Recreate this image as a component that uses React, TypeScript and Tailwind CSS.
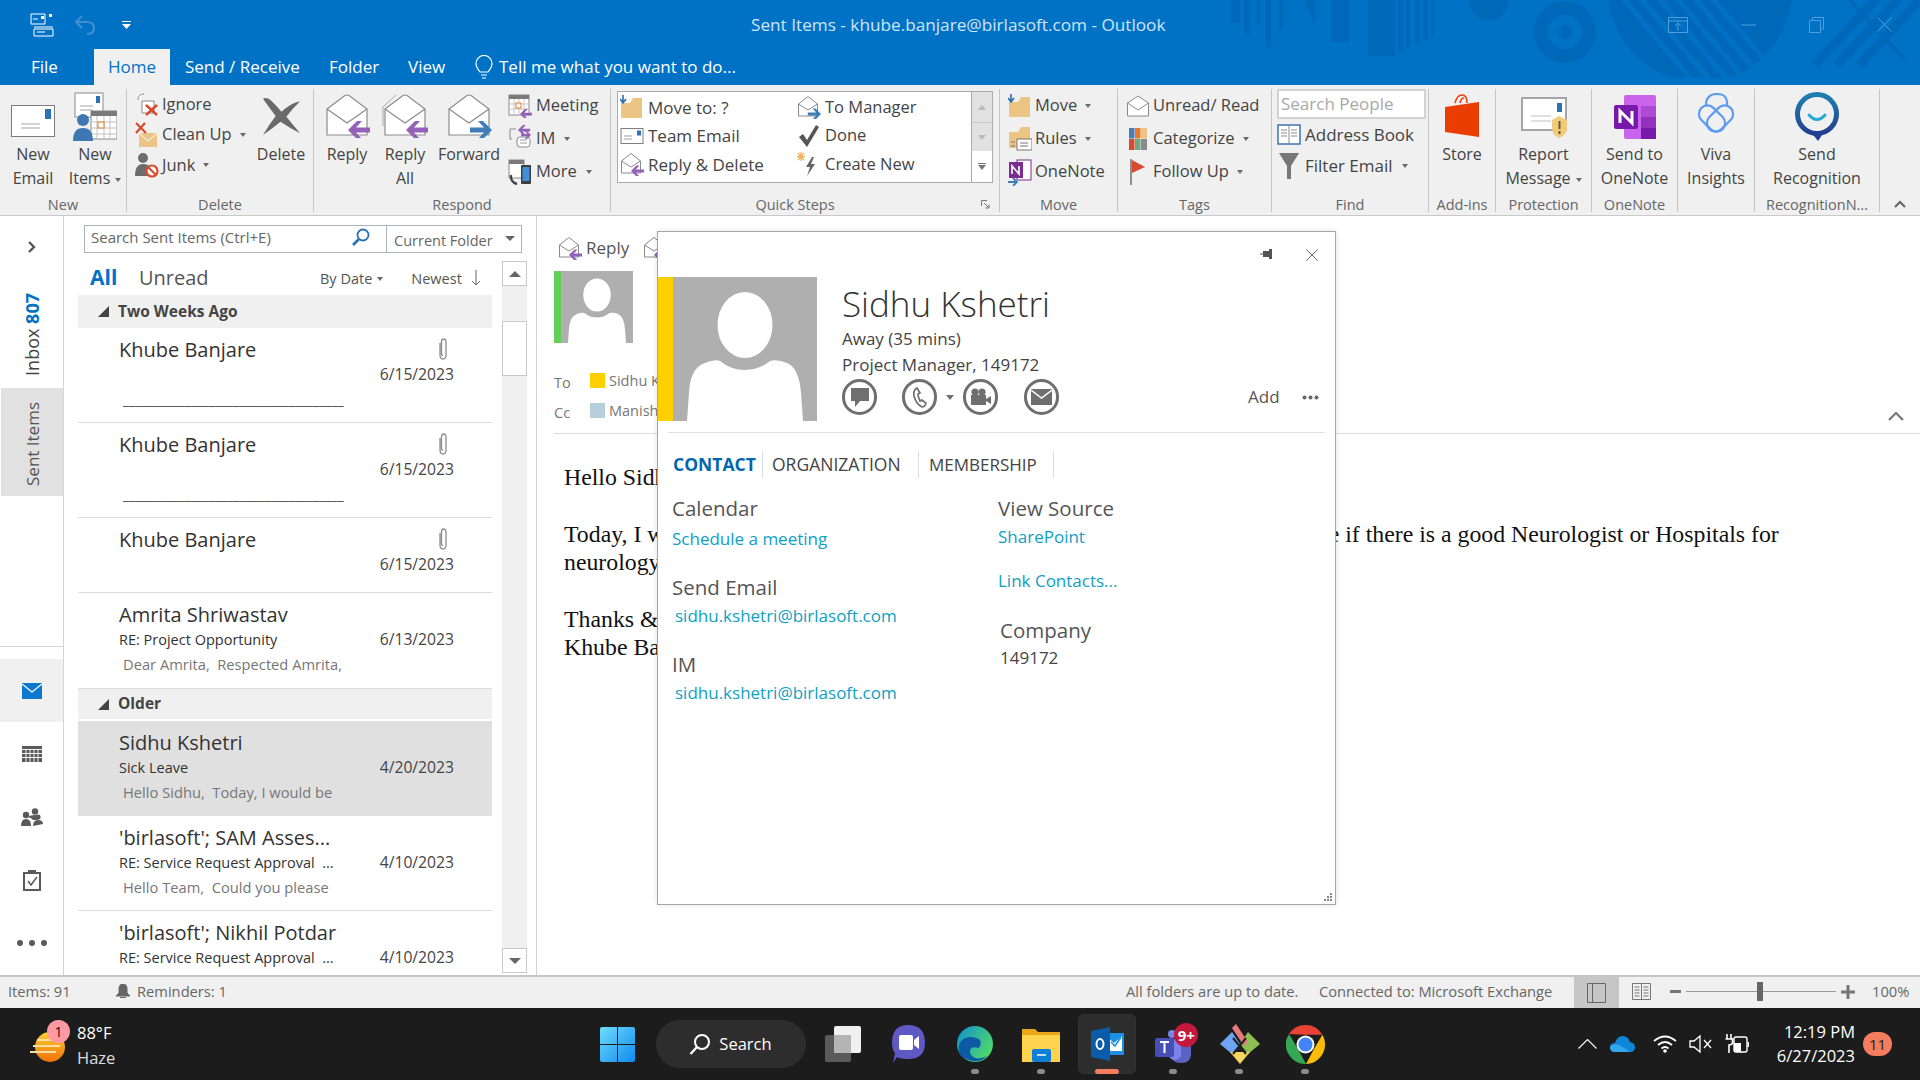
import React from "react";

type Ch = { children?: React.ReactNode };
const PURPLE = "#9460b8";
const BLUE_ARW = "#3f7cb8";

function Arrow({ x, y, s = 1, left = true, color = PURPLE }: { x: number; y: number; s?: number; left?: boolean; color?: string }) {
  const t = `translate(${x} ${y}) scale(${left ? s : -s} ${s})`;
  return <path transform={t} d="M0 0 L9 -9 H14 L8 -2.5 H22 V2.5 H8 L14 9 H9 Z" fill={color} />;
}

function OpenEnvelope({ w = 46, h = 44, kind = "reply" }: { w?: number; h?: number; kind?: "reply" | "all" | "forward" | "plain" }) {
  return (
    <svg width={w} height={h} viewBox="0 0 46 44">
      {kind === "all" && <path d="M1 32 V13 L14 1" fill="none" stroke="#a8a8a8" strokeWidth="1" />}
      <path d="M3 15 L21 1.5 Q23 0.5 25 1.5 L43 15 V41 H3 Z" fill="#fff" stroke="#8c8c8c" strokeWidth="1.2" />
      <path d="M3 15 L23 29 L43 15" fill="none" stroke="#8c8c8c" strokeWidth="1.2" />
      {kind === "reply" && <Arrow x={24} y={36} />}
      {kind === "all" && <Arrow x={24} y={36} />}
      {kind === "forward" && <Arrow x={46} y={36} left={false} color={BLUE_ARW} />}
    </svg>
  );
}

function SmallOpenEnv({ arrow }: { arrow?: "left" | "right" | "none" }) {
  return (
    <svg width="24" height="24" viewBox="0 0 24 24">
      <path d="M1.5 9 L11 1.5 L20.5 9 V21 H1.5 Z" fill="#fff" stroke="#8a8a8a" />
      <path d="M1.5 9 L11 15 L20.5 9" fill="none" stroke="#8a8a8a" />
      {arrow === "left" && <Arrow x={11} y={19} s={0.6} />}
      {arrow === "right" && <Arrow x={24} y={19} s={0.6} left={false} color={BLUE_ARW} />}
    </svg>
  );
}

function Caret({ className = "" }: { className?: string }) {
  return <span className={`inline-block w-0 h-0 border-x-[3.5px] border-x-transparent border-t-[4px] border-t-[#6a6a6a] ml-[5px] align-middle ${className}`} />;
}

function SmallRow({ icon, label, caret, h = "h-[31px]", gap = "gap-[3px]", size = "text-[16.5px]" }: { icon: React.ReactNode; label: string; caret?: boolean; h?: string; gap?: string; size?: string }) {
  return (
    <div className={`flex items-center ${h} ${gap} ${size} whitespace-nowrap text-[#444]`}>
      <span className="w-[24px] h-[24px] flex items-center justify-center shrink-0">{icon}</span>
      <span>{label}</span>
      {caret && <Caret />}
    </div>
  );
}

function Big({ icon, l1, l2, caret, w }: { icon: React.ReactNode; l1: string; l2?: string; caret?: boolean; w: string }) {
  return (
    <div className={`${w} shrink-0 flex flex-col items-center text-[16px] text-[#444] whitespace-nowrap`}>
      <div className="h-[53px] flex items-center justify-center">{icon}</div>
      <div className="h-[24px] leading-[24px]">{l1}</div>
      {l2 && (
        <div className="h-[24px] leading-[24px]">
          {l2}
          {caret && <Caret />}
        </div>
      )}
    </div>
  );
}

function Group({ w, label, children, extra, labelPad = "" }: { w: string; label?: string; children?: React.ReactNode; extra?: React.ReactNode; labelPad?: string }) {
  return (
    <div className={`${w} shrink-0 h-full border-r border-[#c6c6c6] flex flex-col relative`}>
      <div className="h-[104px] shrink-0 flex">{children}</div>
      <div className={`h-[19px] shrink-0 mt-[2px] flex items-center justify-center text-[14.5px] text-[#666] whitespace-nowrap ${labelPad}`}>{label}</div>
      {extra}
    </div>
  );
}

function FolderIcon({ arrow }: { arrow?: boolean }) {
  return (
    <svg width="24" height="24" viewBox="0 0 24 24">
      <path d="M1 8 H10 L13 3 H22 V23 H1 Z" fill="#ecc585" />
      {arrow && <path d="M3 0 V7 M0 4 L3 8 L6 4" fill="none" stroke="#2c6cb0" strokeWidth="1.6" />}
    </svg>
  );
}

function SmallEnvelope() {
  return (
    <svg width="24" height="18" viewBox="0 0 24 18">
      <rect x="1" y="1.5" width="22" height="15" fill="#fff" stroke="#7f7f7f" />
      <rect x="17" y="3.5" width="4" height="5" fill="#2a72b5" />
      <path d="M4 9 H12 M4 12 H12" stroke="#9a9a9a" />
    </svg>
  );
}

function Ribbon() {
  return (
    <div className="h-[131px] bg-[#f0f0f0] border-b border-[#c9c9c9] pt-[4px] pb-[3px] flex">
      <Group w="w-[127px]" label="New">
        <div className="w-[2px]" />
        <Big
          w="w-[62px]"
          icon={
            <svg width="44" height="32" viewBox="0 0 44 32" className="mt-[10px]">
              <rect x="0.5" y="0.5" width="43" height="31" fill="#fff" stroke="#7c7c7c" />
              <rect x="34" y="4" width="6" height="10" fill="#2a72b5" />
              <path d="M10 19 H29 M10 23 H29" stroke="#a5a5a5" />
            </svg>
          }
          l1="New"
          l2="Email"
        />
        <Big
          w="w-[62px]"
          icon={
            <svg width="44" height="50" viewBox="0 0 44 50">
              <rect x="2" y="2" width="28" height="24" fill="#fff" stroke="#8a8a8a" />
              <rect x="23" y="5" width="4" height="7" fill="#2a72b5" />
              <path d="M7 15 H20 M7 19 H20" stroke="#a5a5a5" />
              <rect x="18" y="20" width="26" height="28" fill="#fff" stroke="#888" />
              <rect x="18" y="20" width="26" height="5" fill="#7a7a7a" />
              <path d="M24 25 V48 M31 25 V48 M37 25 V48 M18 31 H44 M18 37 H44 M18 43 H44" stroke="#c2c2c2" />
              <rect x="25" y="31" width="6" height="6" fill="#fff" stroke="#e07a2a" />
              <circle cx="10" cy="29" r="6" fill="#3d78b5" />
              <path d="M0 50 Q0 37 10 37 Q20 37 20 50 Z" fill="#3d78b5" />
            </svg>
          }
          l1="New"
          l2="Items"
          caret
        />
      </Group>
      <Group w="w-[187px]" label="Delete">
        <div className="w-[123px] pl-[8px] flex flex-col">
          <SmallRow
            h="h-[30.5px]"
            label="Ignore"
            icon={
              <svg width="24" height="24" viewBox="0 0 24 24">
                <path d="M3 8 Q3 2 9 2 M7 9 H19 V21 H7 Z" fill="#fff" stroke="#8a8a8a" />
                <path d="M11 13 L22 23 M22 13 L11 23" stroke="#d9492e" strokeWidth="2.4" />
              </svg>
            }
          />
          <SmallRow
            h="h-[30.5px]"
            label="Clean Up"
            caret
            icon={
              <svg width="24" height="26" viewBox="0 0 24 26">
                <path d="M4 11 H22 V25 H4 Z" fill="#ecc585" />
                <path d="M4 11 L13 19 L22 11" fill="none" stroke="#fff" />
                <path d="M1 1 L11 11 M10 1 L1 11" stroke="#d9492e" strokeWidth="2.2" />
              </svg>
            }
          />
          <SmallRow
            h="h-[30.5px]"
            label="Junk"
            caret
            icon={
              <svg width="24" height="26" viewBox="0 0 24 26">
                <circle cx="8" cy="6" r="5" fill="#6d6d6d" />
                <path d="M0 24 Q0 12 8 12 Q14 12 15 16 L14 24 Z" fill="#6d6d6d" />
                <circle cx="17" cy="19" r="5.5" fill="#fff" stroke="#d9492e" strokeWidth="2.2" />
                <path d="M13 15 L21 23" stroke="#d9492e" strokeWidth="2.2" />
              </svg>
            }
          />
        </div>
        <Big
          w="w-[62px]"
          icon={
            <svg width="41" height="38" viewBox="0 0 42 46" preserveAspectRatio="none">
              <path d="M2 2 Q6 0 10 4 Q17 12 21 18 Q29 8 40 5 Q32 14 26 24 Q33 34 40 44 Q30 38 20 30 Q12 38 2 46 Q8 34 15 23 Q8 12 2 2 Z" fill="#6a6a6a" />
            </svg>
          }
          l1="Delete"
        />
      </Group>
      <Group w="w-[297px]" label="Respond">
        <div className="w-[4px]" />
        <Big w="w-[58px]" icon={<OpenEnvelope />} l1="Reply" />
        <Big w="w-[58px]" icon={<OpenEnvelope kind="all" />} l1="Reply" l2="All" />
        <Big w="w-[70px]" icon={<OpenEnvelope kind="forward" />} l1="Forward" />
        <div className="w-[4px]" />
        <div className="flex flex-col gap-[2px] pt-[1px]">
          <SmallRow
            label="Meeting"
            gap="gap-[4px]"
            icon={
              <svg width="24" height="24" viewBox="0 0 24 24">
                <rect x="1" y="1" width="20" height="20" fill="#fff" stroke="#888" />
                <rect x="1" y="1" width="20" height="4" fill="#7a7a7a" />
                <path d="M6 5 V21 M11 5 V21 M16 5 V21 M1 10 H21 M1 15 H21" stroke="#c8c8c8" />
                <rect x="8" y="9" width="5" height="5" fill="#fff" stroke="#e07a2a" />
                <Arrow x={12} y={20} s={0.55} />
              </svg>
            }
          />
          <SmallRow
            label="IM"
            caret
            gap="gap-[4px]"
            icon={
              <svg width="24" height="28" viewBox="0 0 24 28">
                <path d="M4 14 H2 V4 H8" fill="none" stroke="#8a8a8a" />
                <rect x="9" y="12" width="13" height="10" rx="3" fill="#fff" stroke="#8a8a8a" />
                <path d="M12 15 H19 M12 18 H19" stroke="#a0a0a0" />
                <Arrow x={10} y={5} s={0.55} />
                <Arrow x={23} y={10} s={0.45} left={false} />
              </svg>
            }
          />
          <SmallRow
            label="More"
            caret
            gap="gap-[4px]"
            icon={
              <svg width="24" height="28" viewBox="0 0 24 28">
                <rect x="1" y="2" width="15" height="18" fill="#fff" stroke="#888" />
                <rect x="1" y="2" width="15" height="4" fill="#7a7a7a" />
                <rect x="13" y="7" width="10" height="19" rx="1" fill="#3d3d3d" />
                <rect x="14.5" y="9" width="7" height="14" fill="#3f8fd6" />
                <path d="M3 17 Q2 24 9 26" fill="none" stroke="#444" strokeWidth="2.4" />
              </svg>
            }
          />
        </div>
      </Group>
      <Group
        w="w-[389px]"
        label="Quick Steps"
        labelPad="pr-[20px]"
        extra={
          <svg width="9" height="9" viewBox="0 0 9 9" className="absolute right-[9px] bottom-[3px]">
            <path d="M0.5 6 V0.5 H6 M3 3 L8 8 M8 4.5 V8 H4.5" fill="none" stroke="#777" />
          </svg>
        }
      >
        <div className="ml-[6px] mt-[2px] w-[376px] h-[92px] border border-[#ababab] bg-white flex text-[#555]">
          <div className="flex-1 grid grid-cols-[177px_1fr] pl-[2px] pt-[1px] content-start">
            <SmallRow h="h-[28.5px]" gap="gap-[4px]" label="Move to: ?" size="text-[17px]" icon={<FolderIcon arrow />} />
            <SmallRow h="h-[28.5px]" gap="gap-[4px]" label="To Manager" icon={<SmallOpenEnv arrow="right" />} />
            <SmallRow h="h-[28.5px]" gap="gap-[4px]" label="Team Email" size="text-[17px]" icon={<SmallEnvelope />} />
            <SmallRow
              h="h-[28.5px]"
              gap="gap-[4px]"
              label="Done"
              icon={
                <svg width="22" height="24" viewBox="0 0 22 24">
                  <path d="M1 13 L5 10 L9 16 L18 1 L21 3 L9 23 Z" fill="#555" />
                </svg>
              }
            />
            <SmallRow h="h-[28.5px]" gap="gap-[4px]" label="Reply & Delete" size="text-[17px]" icon={<SmallOpenEnv arrow="left" />} />
            <SmallRow
              h="h-[28.5px]"
              gap="gap-[4px]"
              label="Create New"
              icon={
                <svg width="24" height="26" viewBox="0 0 24 26">
                  <path d="M4 1 V10 M0 5.5 H8 M1 2 L7 9 M7 2 L1 9" stroke="#efb35c" strokeWidth="1.3" />
                  <path d="M15 6 L9 16 H13 L10 25 L18 13 H14 L17 6 Z" fill="#666" />
                </svg>
              }
            />
          </div>
          <div className="w-[21px] border-l border-[#ababab] flex flex-col">
            <div className="h-[31px] bg-[#e1e1e1] border-b border-[#c9c9c9] flex items-center justify-center">
              <span className="w-0 h-0 border-x-[4px] border-x-transparent border-b-[5px] border-b-[#bbb]" />
            </div>
            <div className="h-[28px] bg-[#e1e1e1] flex items-center justify-center">
              <span className="w-0 h-0 border-x-[4px] border-x-transparent border-t-[5px] border-t-[#bbb]" />
            </div>
            <div className="flex-1 flex flex-col items-center justify-center gap-[1px]">
              <span className="w-[8px] h-px bg-[#777]" />
              <span className="w-0 h-0 border-x-[4px] border-x-transparent border-t-[5px] border-t-[#777]" />
            </div>
          </div>
        </div>
      </Group>
      <Group w="w-[118px]" label="Move">
        <div className="flex flex-col pl-[8px] gap-[2px] pt-[1px]">
          <SmallRow label="Move" caret icon={<FolderIcon arrow />} />
          <SmallRow
            label="Rules"
            caret
            icon={
              <svg width="24" height="26" viewBox="0 0 24 26">
                <path d="M1 6 H10 L13 1 H22 V22 H1 Z" fill="#ecc585" />
                <rect x="9" y="13" width="15" height="11" fill="#fff" stroke="#777" />
                <path d="M3 16 H7 M3 20 H7 M12 17 H20 M12 20 H20" stroke="#777" />
              </svg>
            }
          />
          <SmallRow
            label="OneNote"
            icon={
              <svg width="24" height="28" viewBox="0 0 24 28">
                <rect x="9" y="2" width="14" height="20" fill="#fff" stroke="#7b2d8f" />
                <rect x="1" y="4" width="14" height="16" fill="#7b2d8f" />
                <path d="M4 16 V8 L11 16 V8" fill="none" stroke="#fff" strokeWidth="1.6" />
                <path d="M0 24 H8 M5 20 L9 24 L5 28" fill="none" stroke={BLUE_ARW} strokeWidth="1.8" />
              </svg>
            }
          />
        </div>
      </Group>
      <Group w="w-[154px]" label="Tags">
        <div className="flex flex-col pl-[8px] gap-[2px] pt-[1px]">
          <SmallRow
            label="Unread/ Read"
            icon={
              <svg width="24" height="24" viewBox="0 0 24 24">
                <path d="M1.5 9 L12 2 L22.5 9 V22 H1.5 Z" fill="#fff" stroke="#8a8a8a" />
                <path d="M1.5 9 L12 16 L22.5 9" fill="none" stroke="#8a8a8a" />
              </svg>
            }
          />
          <SmallRow
            label="Categorize"
            caret
            icon={
              <svg width="18" height="22" viewBox="0 0 18 22">
                <rect width="5.5" height="10.5" fill="#4a7db5" />
                <rect x="6" width="5.5" height="10.5" fill="#e67b23" />
                <rect x="12" width="6" height="10.5" fill="#ecc585" />
                <rect y="11" width="5.5" height="11" fill="#d9492e" />
                <rect x="6" y="11" width="5.5" height="11" fill="#6fa88a" />
                <rect x="12" y="11" width="6" height="11" fill="#8a8a8a" />
              </svg>
            }
          />
          <SmallRow
            label="Follow Up"
            caret
            icon={
              <svg width="18" height="26" viewBox="0 0 18 26">
                <path d="M2 0 V26" stroke="#777" strokeWidth="1.6" />
                <path d="M3 1 L16 8 L3 14 Z" fill="#d9492e" />
              </svg>
            }
          />
        </div>
      </Group>
      <Group w="w-[157px]" label="Find">
        <div className="flex flex-col pl-[5px]">
          <div className="w-[149px] h-[30px] border-2 border-[#d2d2d2] bg-white text-[#a8a8a8] text-[17px] leading-[26px] pl-[2px] whitespace-nowrap">Search People</div>
          <SmallRow
            h="h-[32px]"
            gap="gap-[4px]"
            size="text-[17px]"
            label="Address Book"
            icon={
              <svg width="24" height="24" viewBox="0 0 24 24">
                <rect x="1" y="2" width="22" height="19" fill="#fff" stroke="#3f72ad" strokeWidth="1.5" />
                <path d="M12 2 V21 M4 7 H10 M4 10 H10 M4 13 H10 M14 7 H20 M14 10 H20 M14 13 H20" stroke="#8a8a8a" />
              </svg>
            }
          />
          <SmallRow
            h="h-[30px]"
            gap="gap-[4px]"
            size="text-[17px]"
            label="Filter Email"
            caret
            icon={
              <svg width="22" height="28" viewBox="0 0 22 28">
                <path d="M1 1 H21 L13 14 V27 H9 V14 Z" fill="#777" />
              </svg>
            }
          />
        </div>
      </Group>
      <Group w="w-[67px]" label="Add-ins">
        <Big
          w="w-full"
          l1="Store"
          icon={
            <svg width="36" height="44" viewBox="0 0 36 44">
              <path d="M11 9 Q13 1 18 1 Q23 1 23 9 M16 9 Q17 4 20 4" fill="none" stroke="#e8400c" strokeWidth="1.6" />
              <path d="M1 13 L35 8 V43 L1 38 Z" fill="#ea3e00" />
            </svg>
          }
        />
      </Group>
      <Group w="w-[96px]" label="Protection">
        <Big
          w="w-full"
          l1="Report"
          l2="Message"
          caret
          icon={
            <svg width="46" height="42" viewBox="0 0 46 42" className="mt-[2px]">
              <rect x="1" y="2" width="44" height="32" fill="#fff" stroke="#a5a5a5" strokeWidth="2" />
              <rect x="36" y="7" width="5" height="9" fill="#2a72b5" />
              <path d="M10 20 H30 M10 25 H30" stroke="#c0c0c0" />
              <path d="M31 24 L38 20 L46 24 V32 Q46 39 38 42 Q31 39 31 32 Z" fill="#f0cc7a" />
              <path d="M38.5 25 V33 M38.5 35 V38" stroke="#665a33" strokeWidth="2" />
            </svg>
          }
        />
      </Group>
      <Group w="w-[86px]" label="OneNote">
        <Big
          w="w-full"
          l1="Send to"
          l2="OneNote"
          icon={
            <svg width="44" height="46" viewBox="0 0 44 46" className="mt-[2px]">
              <rect x="11" y="1" width="32" height="44" rx="2" fill="#ca64ea" />
              <rect x="28" y="12" width="15" height="11" fill="#ae4bd5" />
              <rect x="28" y="23" width="15" height="11" fill="#9332bf" />
              <rect x="28" y="34" width="15" height="11" fill="#7719aa" />
              <rect x="1" y="11" width="24" height="24" rx="2" fill="#7719aa" />
              <path d="M7 29 V17 L19 29 V17" fill="none" stroke="#fff" strokeWidth="3" />
            </svg>
          }
        />
      </Group>
      <Group w="w-[77px]">
        <Big
          w="w-full"
          l1="Viva"
          l2="Insights"
          icon={
            <svg width="46" height="46" viewBox="0 0 46 46" className="mt-[1px]">
              <g fill="none" stroke="#5d9cf2" strokeWidth="2.2">
                <rect x="4" y="17" width="30" height="17" rx="8.5" transform="rotate(45 19 25.5)" />
                <rect x="12" y="17" width="30" height="17" rx="8.5" transform="rotate(-45 27 25.5)" />
                <path d="M13 12 Q13 1 24 1 Q35 1 34 12" />
              </g>
            </svg>
          }
        />
      </Group>
      <Group w="w-[125px]" label="RecognitionN...">
        <Big
          w="w-full"
          l1="Send"
          l2="Recognition"
          icon={
            <svg width="46" height="50" viewBox="0 0 46 50">
              <defs>
                <linearGradient id="rg" x1="0" y1="0" x2="0" y2="1">
                  <stop offset="0" stopColor="#1f7fb0" />
                  <stop offset="1" stopColor="#233f8f" />
                </linearGradient>
              </defs>
              <circle cx="23" cy="23" r="19.5" fill="none" stroke="url(#rg)" strokeWidth="5" />
              <path d="M17 41 L24 50 L30 41 Z" fill="#233f8f" />
              <path d="M15 24 Q23 33 31 24" fill="none" stroke="#25a7d8" strokeWidth="3" strokeLinecap="round" />
            </svg>
          }
        />
      </Group>
      <div className="flex-1 flex items-end justify-center pb-[4px]">
        <svg width="12" height="8" viewBox="0 0 12 8">
          <path d="M1 7 L6 2 L11 7" fill="none" stroke="#666" strokeWidth="2" />
        </svg>
      </div>
    </div>
  );
}

function TitleBar() {
  const c = "#0068b8";
  return (
    <div className="relative">
      <svg width="700" height="85" viewBox="1220 0 700 85" className="absolute right-0 top-0">
        <defs>
          <clipPath id="bc">
            <circle cx="1700" cy="-10" r="92" />
          </clipPath>
        </defs>
        {[
          [1231, 9, 23],
          [1246, 4, 35],
          [1244, 4, 32],
          [1257, 3, 24],
          [1266, 5, 47],
          [1279, 4, 30],
          [1331, 18, 42],
          [1368, 27, 56],
          [1398, 5, 52],
          [1406, 4, 48],
          [1415, 4, 44],
          [1424, 4, 40],
          [1431, 3, 36],
        ].map(([x, w, h]) => (
          <rect key={x} x={x} y="0" width={w} height={h} fill={c} />
        ))}
        <path d="M1305 0 H1315 V28 Z" fill={c} />
        <circle cx="1489" cy="0" r="20" fill={c} />
        <circle cx="1565" cy="32" r="24" fill="none" stroke={c} strokeWidth="14" />
        <circle cx="1565" cy="32" r="7" fill={c} />
        <g clipPath="url(#bc)">
          <rect x="1600" y="-110" width="200" height="188" fill={c} />
          {[0, 1, 2, 3, 4, 5].map((i) => (
            <path key={i} d={`M${1620 + i * 18} -5 L${1700 + i * 18} 90`} stroke="#0072c6" strokeWidth="5" />
          ))}
        </g>
        {[0, 1, 2].map((i) => (
          <path key={i} d={`M${1880 + i * 22} -5 L${1815 + i * 22} 65`} stroke={c} strokeWidth="9" />
        ))}
        <path d="M1845 -5 L1905 60" stroke={c} strokeWidth="4" />
      </svg>
      <div className="relative h-[49px] flex items-center">
        <div className="w-[30px]" />
        <svg width="24" height="24" viewBox="0 0 24 24">
          <path d="M1 1 H15 V11 H1 Z M4 16 H23 V23 H4 Z M4 14 H23" fill="none" stroke="#fff" />
          <rect x="11" y="3" width="3" height="3" fill="#fff" />
          <rect x="19" y="1" width="3" height="3" fill="#fff" />
          <path d="M3 6 H8 M7 19 H15" stroke="#fff" />
        </svg>
        <svg width="22" height="20" viewBox="0 0 22 20" className="ml-[20px]">
          <path d="M8 1 L2 7 L8 13 M2 7 H13 Q20 7 20 13 Q20 19 13 19" fill="none" stroke="#3f8fd0" strokeWidth="2.2" />
        </svg>
        <svg width="9" height="8" viewBox="0 0 9 8" className="ml-[26px]">
          <path d="M0 0 H9 V1 H0 Z M0 3 H9 L4.5 8 Z" fill="#fff" />
        </svg>
        <div className="absolute left-[751px] top-[12px] text-[17.2px] text-[#cfe4f5] whitespace-nowrap">Sent Items - khube.banjare@birlasoft.com - Outlook</div>
        <div className="ml-auto flex items-center pr-[28px] gap-[53px]">
          <svg width="20" height="16" viewBox="0 0 20 16">
            <path d="M0.5 0.5 H19.5 V15.5 H0.5 Z M0.5 4 H19.5 M10 14 V6 M7 9 L10 6 L13 9" fill="none" stroke="#4f9fdc" />
          </svg>
          <svg width="15" height="2" viewBox="0 0 15 2">
            <path d="M0 1 H15" stroke="#4f9fdc" />
          </svg>
          <svg width="15" height="16" viewBox="0 0 15 16">
            <path d="M0.5 3.5 H11.5 V15.5 H0.5 Z M3.5 3 V0.5 H14.5 V12 H12" fill="none" stroke="#4f9fdc" />
          </svg>
          <svg width="15" height="15" viewBox="0 0 15 15">
            <path d="M0.5 0.5 L14.5 14.5 M14.5 0.5 L0.5 14.5" stroke="#4f9fdc" />
          </svg>
        </div>
      </div>
      <div className="relative h-[36px] flex text-white text-[17px] leading-[36px] whitespace-nowrap">
        <div className="w-[94px] pl-[31px]">File</div>
        <div className="w-[76px] bg-[#f0f0f0] text-[#0072c6] text-center">Home</div>
        <div className="pl-[15px] w-[159px]">Send / Receive</div>
        <div className="w-[79px]">Folder</div>
        <div className="w-[67px]">View</div>
        <div className="flex items-center gap-[6px]">
          <svg width="18" height="24" viewBox="0 0 18 24">
            <path d="M5 17 Q1 12 1 8.5 A8 8 0 0 1 17 8.5 Q17 12 13 17 Z M6 20 H12 M7 23 H11" fill="none" stroke="#fff" strokeWidth="1.2" />
          </svg>
          <span>Tell me what you want to do...</span>
        </div>
      </div>
    </div>
  );
}

function Clip() {
  return (
    <svg width="12" height="24" viewBox="0 0 12 24">
      <path d="M3 6 V18 Q3 22 6 22 Q9 22 9 18 V5 Q9 2 6.5 2 Q4.5 2 4.5 5 V17 Q4.5 18.5 6 18.5" fill="none" stroke="#8b8b8b" strokeWidth="1.3" />
    </svg>
  );
}

function Mail({ name, sub, prev, date, clip, selected, border = true, short, rule }: { name: string; sub?: string; prev?: string; date: string; clip?: boolean; selected?: boolean; border?: boolean; short?: boolean; rule?: boolean }) {
  return (
    <div className={`${short ? "h-[75px]" : "h-[95px]"} shrink-0 pl-[41px] pr-[38px] pt-[10px] whitespace-nowrap ${selected ? "bg-[#e0e0e0]" : "bg-white"} ${border ? "border-b border-[#dcdcdc]" : ""}`}>
      <div className="h-[24px] flex items-center justify-between text-[20px] text-[#333]">
        <span>{name}</span>
        {clip && (
          <span className="mr-[5px] -mt-[2px]">
            <Clip />
          </span>
        )}
      </div>
      <div className="h-[25px] flex items-center justify-between text-[14.5px] text-[#333]">
        <span>{sub}</span>
        <span className="text-[15.7px] text-[#444]">{date}</span>
      </div>
      {rule && <div className="ml-[4px] text-[14px] leading-[25px] text-[#555]">____________________________________</div>}
      {prev && <div className="h-[25px] flex items-center ml-[4px] text-[14.7px] text-[#777]">{prev}</div>}
    </div>
  );
}

function GroupHead({ label, top }: { label: string; top?: boolean }) {
  return (
    <div className={`h-[33px] shrink-0 bg-[#f0f0f0] flex items-center pl-[20px] gap-[9px] text-[15.5px] font-bold text-[#444] ${top ? "border-t border-[#dcdcdc] border-b-2 border-b-white" : ""}`}>
      <span className="w-0 h-0 border-l-[11px] border-l-transparent border-b-[11px] border-b-[#444]" />
      <span>{label}</span>
    </div>
  );
}

function Rail() {
  const items = [
    <svg key="m" width="20" height="16" viewBox="0 0 20 16"><rect width="20" height="16" fill="#0b78cf" /><path d="M0 1 L10 9 L20 1" fill="none" stroke="#fff" strokeWidth="1.2" /></svg>,
    <svg key="c" width="20" height="16" viewBox="0 0 20 16"><rect width="20" height="16" fill="#5a5a5a" /><path d="M0 3.5 H20 M0 7.5 H20 M0 11.5 H20 M4 3 V16 M8 3 V16 M12 3 V16 M16 3 V16" stroke="#fff" strokeWidth="0.9" /></svg>,
    <svg key="p" width="22" height="18" viewBox="0 0 22 18"><g fill="#5a5a5a"><circle cx="5" cy="7" r="3.2" /><circle cx="14" cy="3.5" r="3.2" /><circle cx="17" cy="9" r="2.6" /><path d="M0 18 Q0 11 5 11 Q10 11 10 18 Z M7 9 Q9 7 14 7 Q17 7 17 12 H12 Q11 10 7 9 Z M12 18 Q12 12 17 12 Q22 12 22 16 Z" /></g></svg>,
    <svg key="t" width="18" height="22" viewBox="0 0 18 22"><path d="M1 4 H17 V21 H1 Z" fill="#fff" stroke="#5a5a5a" strokeWidth="2" /><rect x="5" y="1" width="8" height="4" fill="#5a5a5a" /><path d="M5 12 L8 16 L14 8" fill="none" stroke="#5a5a5a" strokeWidth="1.5" /></svg>,
    <svg key="d" width="30" height="6" viewBox="0 0 30 6"><g fill="#5a5a5a"><circle cx="3" cy="3" r="3" /><circle cx="15" cy="3" r="3" /><circle cx="27" cy="3" r="3" /></g></svg>,
  ];
  return (
    <div className="w-[64px] shrink-0 border-r border-[#d4d4d4] flex flex-col">
      <div className="h-[431px] shrink-0 border-b border-[#d4d4d4] flex flex-col">
        <div className="h-[62px] flex items-center justify-center">
          <svg width="10" height="12" viewBox="0 0 10 12"><path d="M2 1 L7 6 L2 11" fill="none" stroke="#555" strokeWidth="2.4" /></svg>
        </div>
        <div className="h-[110px] flex items-start justify-center pt-[15px]">
          <div className="[writing-mode:vertical-rl] rotate-180 text-[18px] text-[#444] whitespace-nowrap leading-none">
            Inbox <span className="font-bold text-[#0072c6] ml-[9px]">807</span>
          </div>
        </div>
        <div className="h-[108px] ml-px bg-[#e1e1e1] flex items-center justify-center">
          <div className="[writing-mode:vertical-rl] rotate-180 text-[17px] text-[#555] whitespace-nowrap leading-none translate-y-[2px]">Sent Items</div>
        </div>
      </div>
      <div className="mt-[12px] flex flex-col">
        {items.map((it, i) => (
          <div key={i} className={`h-[63px] flex items-center justify-center ${i === 0 ? "bg-[#f0f0f0]" : ""}`}>
            {it}
          </div>
        ))}
      </div>
    </div>
  );
}

function ListPane() {
  return (
    <div className="w-[473px] shrink-0 border-r border-[#d4d4d4] pl-[14px] pt-[9px] flex flex-col overflow-hidden">
      <div className="ml-[6px] w-[438px] h-[28px] shrink-0 border border-[#a9b4c2] flex text-[15px] text-[#666] whitespace-nowrap">
        <div className="w-[302px] flex items-center justify-between pl-[6px] pr-[16px] border-r border-[#a9b4c2] pb-[3px]">
          <span>Search Sent Items (Ctrl+E)</span>
          <svg width="19" height="19" viewBox="0 0 19 19"><circle cx="12" cy="7" r="5.5" fill="none" stroke="#2a72b5" strokeWidth="1.8" /><path d="M8 11 L2 17" stroke="#2a72b5" strokeWidth="2.6" /></svg>
        </div>
        <div className="flex-1 flex items-center pl-[7px] pt-[3px] text-[14.5px]">
          <span>Current Folder</span>
          <span className="ml-[12px] -mt-[4px] w-0 h-0 border-x-[5px] border-x-transparent border-t-[5px] border-t-[#666]" />
        </div>
      </div>
      <div className="flex-1 flex min-h-0">
        <div className="w-[414px] shrink-0 flex flex-col overflow-hidden">
          <div className="h-[42px] shrink-0 flex items-center pl-[12px] pt-[7px] whitespace-nowrap">
            <span className="text-[21px] font-bold text-[#0072c6] w-[49px]">All</span>
            <span className="text-[20px] text-[#555] w-[181px]">Unread</span>
            <span className="text-[14.5px] text-[#555] pt-[3px]">By Date</span>
            <Caret className="mt-[2px]" />
            <span className="text-[14.5px] text-[#555] ml-[28px] pt-[3px]">Newest</span>
            <svg width="10" height="18" viewBox="0 0 10 18" className="ml-[9px]"><path d="M5 1 V16 M1 12 L5 16 L9 12" fill="none" stroke="#666" /></svg>
          </div>
          <GroupHead label="Two Weeks Ago" />
          <Mail name="Khube Banjare" date="6/15/2023" clip rule />
          <Mail name="Khube Banjare" date="6/15/2023" clip rule />
          <Mail name="Khube Banjare" date="6/15/2023" clip short />
          <Mail name="Amrita Shriwastav" sub="RE: Project Opportunity" prev={"Dear Amrita,\u00a0\u00a0Respected Amrita,"} date="6/13/2023" border={false} />
          <GroupHead label="Older" top />
          <Mail name="Sidhu Kshetri" sub="Sick Leave" prev={"Hello Sidhu,\u00a0\u00a0Today, I would be"} date="4/20/2023" selected border={false} />
          <Mail name="'birlasoft'; SAM Asses..." sub={"RE: Service Request Approval\u00a0\u00a0..."} prev={"Hello Team,\u00a0\u00a0Could you please"} date="4/10/2023" />
          <Mail name="'birlasoft'; Nikhil Potdar" sub={"RE: Service Request Approval\u00a0\u00a0..."} date="4/10/2023" border={false} />
        </div>
        <div className="ml-[10px] mt-[8px] mb-[2px] w-[25px] bg-[#f0f0f0] flex flex-col">
          <div className="h-[25px] bg-white border border-[#c9c9c9] flex items-center justify-center">
            <span className="w-0 h-0 border-x-[6px] border-x-transparent border-b-[6px] border-b-[#666]" />
          </div>
          <div className="mt-[35px] h-[55px] bg-white border border-[#c9c9c9]" />
          <div className="mt-auto h-[25px] bg-white border border-[#c9c9c9] flex items-center justify-center">
            <span className="w-0 h-0 border-x-[6px] border-x-transparent border-t-[6px] border-t-[#666]" />
          </div>
        </div>
      </div>
    </div>
  );
}

function Silhouette({ w, h, stripe, color }: { w: number; h: number; stripe: number; color: string }) {
  return (
    <div className="flex shrink-0" style={{ height: h }}>
      <div style={{ width: stripe, background: color }} />
      <svg width={w} height={h} viewBox="0 0 144 144" preserveAspectRatio="none" className="bg-[#afafaf]">
        <ellipse cx="72" cy="48" rx="27.5" ry="33" fill="#fff" />
        <path d="M14 144 L16 116 Q17 91 32 86 Q42 82 47 84 Q58 93 72 93 Q86 93 97 84 Q104 82 114 86 Q126 91 128 116 L130 144 Z" fill="#fff" />
      </svg>
    </div>
  );
}

function Reading() {
  return (
    <div className="flex-1 min-w-0 pt-[17px] flex flex-col">
      <div className="pl-[21px] h-[30px] flex items-center gap-[4px] text-[17px] text-[#555] whitespace-nowrap">
        <SmallOpenEnv arrow="left" />
        <span className="mr-[10px]">Reply</span>
        <SmallOpenEnv arrow="left" />
      </div>
      <div className="pl-[17px] mt-[8px]">
        <Silhouette w={72} h={72} stripe={7} color="#62d05a" />
      </div>
      <div className="pl-[17px] mt-[25px] flex items-center h-[25px] text-[14.5px] text-[#777]">
        <span className="w-[36px] pt-[4px]">To</span>
        <span className="w-[15px] h-[15px] bg-[#ffcf00] mr-[4px]" />
        <span>Sidhu Kshetri</span>
      </div>
      <div className="pl-[17px] mt-[5px] flex items-center h-[25px] text-[14.5px] text-[#777]">
        <span className="w-[36px] pt-[4px]">Cc</span>
        <span className="w-[15px] h-[15px] bg-[#b5cfdb] mr-[4px]" />
        <span>Manish Kumar</span>
      </div>
      <div className="ml-[17px] mt-[7px] h-[13px] border-b border-[#dcdcdc] flex justify-end pr-[16px] -translate-y-[9px] relative">
        <svg width="16" height="10" viewBox="0 0 16 10" className="-mt-[10px]">
          <path d="M1 9 L8 2 L15 9" fill="none" stroke="#777" strokeWidth="2.2" />
        </svg>
      </div>
      <div className="pl-[27px] pt-[20px] w-[1270px] font-['Liberation_Serif',serif] text-[23.8px] leading-[28px] text-[#111]">
        <p className="mb-[29px]">Hello Sidhu,</p>
        <p className="mb-[29px]">Today, I would be on sick leave as I am not feeling well. Could you please advise if there is a good Neurologist or Hospitals for neurology treatment.</p>
        <p>Thanks &amp; Regards,</p>
        <p>Khube Banjare</p>
      </div>
    </div>
  );
}

function Circ({ children }: Ch) {
  return <div className="w-[35px] h-[36px] rounded-full border-[3px] border-[#6f6f6f] flex items-center justify-center shrink-0">{children}</div>;
}

function Popup() {
  const link = "text-[#0e9fc4]";
  return (
    <div className="absolute left-[657px] top-[231px] w-[679px] h-[674px] bg-white border border-[#a6a6a6] shadow-[0_0_6px_rgba(0,0,0,0.12)] flex flex-col whitespace-nowrap text-[#444]">
      <div className="h-[45px] flex items-end justify-end pr-[17px] pb-[16px] gap-[33px]">
        <svg width="13" height="12" viewBox="0 0 13 12" className="mb-[1px]"><path d="M0 5.5 H3 V6.5 H0 Z M3 3 H9 V9 H3 Z M9 1 H12 V11 H9 Z" fill="#555" /></svg>
        <svg width="12" height="12" viewBox="0 0 12 12"><path d="M0.5 0.5 L11.5 11.5 M11.5 0.5 L0.5 11.5" stroke="#666" /></svg>
      </div>
      <div className="flex h-[144px]">
        <Silhouette w={144} h={144} stripe={15} color="#ffcf00" />
        <div className="ml-[25px] flex-1 flex flex-col pr-[16px]">
          <div className="h-[49px] pt-[5px] flex items-center text-[35px] font-light text-[#333]">Sidhu Kshetri</div>
          <div className="h-[26px] flex items-center text-[17px]">Away (35 mins)</div>
          <div className="h-[26px] flex items-center text-[17px]">Project Manager, 149172</div>
          <div className="h-[40px] flex items-center pb-[2px]">
            <Circ>
              <svg width="18" height="19" viewBox="0 0 18 19"><path d="M0 0 H18 V13 H9 L4 19 V13 H0 Z" fill="#6f6f6f" /></svg>
            </Circ>
            <div className="w-[25px]" />
            <Circ>
              <svg width="14" height="21" viewBox="0 0 14 21"><path d="M4 1 Q0 3 1 9 Q3 17 9 20 Q12 20 13 16 L9 13 L7 14 Q5 10 5 7 L7 6 Z" fill="none" stroke="#6f6f6f" strokeWidth="1.7" /></svg>
            </Circ>
            <span className="w-[26px] flex justify-center"><span className="w-0 h-0 border-x-[4px] border-x-transparent border-t-[5px] border-t-[#6f6f6f]" /></span>
            <Circ>
              <svg width="22" height="18" viewBox="0 0 22 18"><g fill="#6f6f6f"><circle cx="5" cy="4" r="3.6" /><circle cx="12" cy="4" r="3.6" /><rect x="1" y="7" width="15" height="10" /><path d="M16 11 L21 8 V16 L16 13 Z" /></g></svg>
            </Circ>
            <div className="w-[26px]" />
            <Circ>
              <svg width="21" height="16" viewBox="0 0 21 16"><rect width="21" height="16" fill="#6f6f6f" /><path d="M0 1 L10.5 9 L21 1" fill="none" stroke="#fff" strokeWidth="1.5" /></svg>
            </Circ>
            <span className="ml-auto text-[17px] text-[#555] w-[54px]">Add</span>
            <svg width="17" height="5" viewBox="0 0 17 5"><g fill="#666"><circle cx="2.5" cy="2.5" r="2" /><circle cx="8.5" cy="2.5" r="2" /><circle cx="14.5" cy="2.5" r="2" /></g></svg>
          </div>
        </div>
      </div>
      <div className="mx-[10px] mt-[11px] border-t border-[#e1e1e1]" />
      <div className="mt-[18px] ml-[15px] flex h-[27px] items-center text-[17.5px]">
        <div className="font-bold text-[#0067b0] w-[90px] h-full flex items-center border-r border-[#ddd]">CONTACT</div>
        <div className="pl-[9px] w-[156px] h-full flex items-center border-r border-[#ddd]">ORGANIZATION</div>
        <div className="pl-[10px] w-[135px] h-full flex items-center border-r border-[#ddd] text-[17px]">MEMBERSHIP</div>
      </div>
      <div className="flex ml-[14px] mt-[16px]">
        <div className="w-[326px] flex flex-col">
          <div className="h-[28px] flex items-center text-[20.5px] text-[#555]">Calendar</div>
          <div className={`h-[34px] flex items-center text-[17px] ${link}`}>Schedule a meeting</div>
          <div className="h-[28px] mt-[17px] flex items-center text-[20.5px] text-[#555]">Send Email</div>
          <div className={`h-[30px] pl-[3px] flex items-center text-[17px] ${link}`}>sidhu.kshetri@birlasoft.com</div>
          <div className="h-[28px] mt-[19px] flex items-center text-[20.5px] text-[#555]">IM</div>
          <div className={`h-[30px] pl-[3px] flex items-center text-[17px] ${link}`}>sidhu.kshetri@birlasoft.com</div>
        </div>
        <div className="flex flex-col">
          <div className="h-[28px] flex items-center text-[20.5px] text-[#555]">View Source</div>
          <div className={`h-[30px] flex items-center text-[17px] ${link}`}>SharePoint</div>
          <div className={`h-[30px] mt-[14px] flex items-center text-[17px] ${link}`}>Link Contacts...</div>
          <div className="h-[28px] mt-[20px] ml-[2px] flex items-center text-[20.5px] text-[#555]">Company</div>
          <div className="h-[28px] ml-[2px] flex items-center text-[17px]">149172</div>
        </div>
      </div>
      <svg width="9" height="9" viewBox="0 0 9 9" className="absolute right-[3px] bottom-[3px]">
        <g fill="#888"><rect x="7" y="7" width="2" height="2" /><rect x="4" y="7" width="2" height="2" /><rect x="1" y="7" width="2" height="2" /><rect x="7" y="4" width="2" height="2" /><rect x="4" y="4" width="2" height="2" /><rect x="7" y="1" width="2" height="2" /></g>
      </svg>
    </div>
  );
}

function StatusBar() {
  return (
    <div className="h-[33px] shrink-0 bg-[#f0f0f0] border-t-2 border-[#c6c6c6] flex items-stretch text-[14.7px] text-[#666] whitespace-nowrap pb-[2px]">
      <div className="w-[116px] pl-[8px] flex items-center">Items: 91</div>
      <div className="w-[1010px] flex items-center gap-[7px]">
        <svg width="14" height="15" viewBox="0 0 14 15"><path d="M7 0 Q11 0 11 5 V9 L14 12 H0 L3 9 V5 Q3 0 7 0 Z M4 13.5 H10" fill="#666" stroke="#666" /></svg>
        <span>Reminders: 1</span>
      </div>
      <div className="w-[193px] flex items-center">All folders are up to date.</div>
      <div className="w-[255px] flex items-center">Connected to: Microsoft Exchange</div>
      <div className="w-[45px] bg-[#c6c6c6] flex items-center justify-center -mb-[2px]">
        <svg width="19" height="20" viewBox="0 0 19 20"><path d="M0.5 0.5 H18.5 V19.5 H0.5 Z M5.5 0.5 V19.5" fill="none" stroke="#666" /></svg>
      </div>
      <div className="w-[51px] flex items-center justify-center pr-[7px]">
        <svg width="19" height="20" viewBox="0 0 19 20"><path d="M0.5 1.5 H9.5 V17.5 H0.5 Z M9.5 1.5 H18.5 V17.5 H9.5 Z M2.5 5 H7.5 M2.5 8 H7.5 M2.5 11 H7.5 M2.5 14 H7.5 M11.5 5 H16.5 M11.5 8 H16.5 M11.5 11 H16.5 M11.5 14 H16.5" fill="none" stroke="#777" /></svg>
      </div>
      <div className="flex items-center">
        <span className="w-[11px] h-[3px] bg-[#777]" />
        <div className="relative ml-[5px] w-[150px] h-px bg-[#999]">
          <span className="absolute left-[71px] -top-[9px] w-[6px] h-[19px] bg-[#666]" />
        </div>
        <svg width="14" height="14" viewBox="0 0 14 14" className="ml-[5px]"><path d="M0 7 H14 M7 0 V14" stroke="#777" strokeWidth="3" /></svg>
        <span className="ml-[17px]">100%</span>
      </div>
    </div>
  );
}

function Dot({ x, wide }: { x: number; wide?: boolean }) {
  return <span className={`absolute top-[61px] h-[5px] rounded-full ${wide ? "w-[24px] bg-[#f47c5f]" : "w-[8px] bg-[#8b8b8b]"}`} style={{ left: x }} />;
}

function Taskbar() {
  return (
    <div className="relative flex-1 bg-[#1c1c1c] flex items-center text-white whitespace-nowrap">
      <div className="w-[77px] pl-[30px] relative h-full flex items-center">
        <svg width="36" height="32" viewBox="0 0 36 32" className="mt-[5px]">
          <defs><linearGradient id="s" x1="0" y1="0" x2="0" y2="1"><stop offset="0" stopColor="#ffd02e" /><stop offset="1" stopColor="#f0700b" /></linearGradient></defs>
          <circle cx="20" cy="16" r="15" fill="url(#s)" />
          <path d="M7 9 H26 M3 15 H30 M0 21 H26" stroke="#f6dfa6" strokeWidth="2" />
        </svg>
        <span className="absolute left-[47px] top-[12px] w-[23px] h-[23px] rounded-full bg-[#ff9aa2] text-[#111] text-[14px] flex items-center justify-center">1</span>
      </div>
      <div className="flex flex-col text-[16.5px] leading-[25px] pt-[1px]">
        <span>88°F</span>
        <span className="text-[#ddd]">Haze</span>
      </div>
      <div className="ml-[485px] flex items-center">
        <svg width="35" height="35" viewBox="0 0 35 35">
          <defs><linearGradient id="w" x1="0" y1="0" x2="1" y2="1"><stop offset="0" stopColor="#6fdcfb" /><stop offset="1" stopColor="#0e8bf0" /></linearGradient></defs>
          <path d="M0 2 Q0 0 2 0 H17 V17 H0 Z M18 0 H33 Q35 0 35 2 V17 H18 Z M0 18 H17 V35 H2 Q0 35 0 33 Z M18 18 H35 V33 Q35 35 33 35 H18 Z" fill="url(#w)" />
        </svg>
        <div className="ml-[21px] w-[150px] h-[48px] rounded-full bg-[#2d2d2d] flex items-center pl-[33px] gap-[8px] text-[16.5px]">
          <svg width="22" height="22" viewBox="0 0 22 22"><circle cx="13" cy="9" r="7" fill="none" stroke="#fff" strokeWidth="2" /><path d="M8 14 L1.5 21" stroke="#fff" strokeWidth="2.4" /></svg>
          <span>Search</span>
        </div>
        <svg width="36" height="36" viewBox="0 0 36 36" className="ml-[19px]">
          <rect y="9" width="26" height="27" rx="2" fill="#5a5a5a" />
          <rect x="9" y="0" width="27" height="27" rx="2" fill="#f0f0f0" />
          <rect x="9" y="9" width="17" height="18" fill="#b4b4b4" />
        </svg>
        <svg width="33" height="38" viewBox="0 0 33 38" className="ml-[31px]">
          <path d="M16 0 Q33 0 33 18 Q33 34 16 34 Q9 34 5 32 L1 38 L3 28 Q0 24 0 18 Q0 0 16 0 Z" fill="#5f59c4" />
          <rect x="7" y="10" width="14" height="15" rx="2" fill="#fff" />
          <path d="M22 15 L27 11 V24 L22 20 Z" fill="#fff" />
        </svg>
        <svg width="36" height="36" viewBox="0 0 36 36" className="ml-[32px]">
          <defs><linearGradient id="e" x1="0" y1="0" x2="1" y2="0.6"><stop offset="0" stopColor="#0d8fd3" /><stop offset="1" stopColor="#4fd86a" /></linearGradient></defs>
          <circle cx="18" cy="18" r="18" fill="url(#e)" />
          <path d="M2 26 Q0 12 14 11 Q28 12 22 22 Q12 19 13 27 Q17 36 30 30 Q22 38 12 34 Q4 32 2 26 Z" fill="#0c59a4" />
        </svg>
        <svg width="38" height="36" viewBox="0 0 38 36" className="ml-[29px]">
          <path d="M0 3 H13 L16 6 H38 V36 H0 Z" fill="#e7a716" />
          <rect y="9" width="38" height="27" fill="#ffd34d" />
          <rect x="10" y="23" width="19" height="13" rx="2" fill="#0d7fd4" />
          <rect x="15" y="28" width="9" height="2" fill="#bfe0f8" />
        </svg>
        <div className="ml-[18px] w-[58px] h-[60px] rounded-[5px] bg-[#2d2d2d] border border-[#333] flex items-center justify-center">
          <svg width="33" height="34" viewBox="0 0 33 34">
            <rect x="13" y="6" width="20" height="22" fill="#1d8fe0" />
            <path d="M15 9 L23 16 L31 9 V24 H15 Z" fill="#fff" />
            <path d="M20 15 L24 19 L30 10" fill="none" stroke="#1d8fe0" strokeWidth="1.6" />
            <path d="M0 4 L19 0 V34 L0 30 Z" fill="#0a5ba8" />
            <ellipse cx="9" cy="17" rx="3.5" ry="5" fill="none" stroke="#fff" strokeWidth="2" />
          </svg>
        </div>
        <div className="ml-[19px] relative w-[43px] h-[40px]">
          <svg width="36" height="34" viewBox="0 0 36 34" className="absolute left-0 top-[6px]">
            <circle cx="26" cy="7" r="6" fill="#5a62c4" />
            <path d="M16 10 H36 V24 Q36 33 26 33 Q16 33 16 24 Z" fill="#5a62c4" />
            <circle cx="17" cy="4" r="4" fill="#7b83eb" />
            <path d="M8 9 H26 V26 Q20 34 13 26 Z" fill="#7b83eb" />
            <rect x="0" y="8" width="19" height="19" rx="2" fill="#464eb8" />
            <path d="M5 12 H14 M9.5 12 V23" stroke="#fff" strokeWidth="2" />
          </svg>
          <span className="absolute left-[19px] -top-[1px] w-[24px] h-[24px] rounded-full bg-[#c4183c] text-white text-[15px] font-bold flex items-center justify-center">9+</span>
        </div>
        <svg width="40" height="40" viewBox="0 0 40 40" className="ml-[22px]">
          <path d="M0 20 L12 8 L20 20 L12 30 Z" fill="#6ea6f5" />
          <path d="M40 20 L28 8 L20 20 L28 30 Z" fill="#8cc152" />
          <path d="M20 40 L10 28 H30 Z" fill="#f6d860" />
          <path d="M12 4 L16 0 L28 18 L24 22 Z" fill="#e87a7a" />
          <path d="M13 14 L26 30 M26 14 L13 30" stroke="#222" strokeWidth="2" />
        </svg>
        <svg width="39" height="39" viewBox="0 0 39 39" className="ml-[26px]">
          <path d="M19.5 0 A19.5 19.5 0 0 1 36.4 9.75 H19.5 Z M3 9 A19.5 19.5 0 0 1 19.5 0 V9.75 H19 Z" fill="#ea4335" />
          <path d="M3 9 L12 24 L20 39 A19.5 19.5 0 0 1 3 9 Z" fill="#34a853" />
          <path d="M36.4 9.75 A19.5 19.5 0 0 1 20 39 L28 24 Z" fill="#fbbc05" />
          <circle cx="19.5" cy="19.5" r="9" fill="#fff" />
          <circle cx="19.5" cy="19.5" r="7" fill="#4285f4" />
        </svg>
      </div>
      <Dot x={971} />
      <Dot x={1037} />
      <Dot x={1095} wide />
      <Dot x={1169} />
      <Dot x={1235} />
      <Dot x={1301} />
      <div className="ml-auto flex items-center pr-[28px]">
        <svg width="19" height="10" viewBox="0 0 19 10"><path d="M0.5 9.5 L9.5 0.5 L18.5 9.5" fill="none" stroke="#fff" strokeWidth="1.1" /></svg>
        <svg width="25" height="16" viewBox="0 0 25 16" className="ml-[13px]"><path d="M5 16 Q0 16 0 11 Q0 7 5 7 Q7 0 13 0 Q18 0 20 6 Q25 7 25 11 Q25 16 20 16 Z" fill="#1086d9" /><path d="M5 16 Q0 16 0 11 Q5 6 11 10 L20 16 Z" fill="#31a8ea" /></svg>
        <svg width="24" height="18" viewBox="0 0 24 18" className="ml-[18px]"><path d="M1 6 Q12 -3 23 6 M5 10 Q12 4 19 10 M8.5 13.5 Q12 10.5 15.5 13.5" fill="none" stroke="#fff" strokeWidth="1.7" /><circle cx="12" cy="16" r="1.8" fill="#fff" /></svg>
        <svg width="23" height="18" viewBox="0 0 23 18" className="ml-[12px]"><path d="M1 6 H5 L11 1 V17 L5 12 H1 Z" fill="none" stroke="#fff" strokeWidth="1.3" /><path d="M15 5 L22 13 M22 5 L15 13" stroke="#fff" strokeWidth="1.3" /></svg>
        <svg width="24" height="20" viewBox="0 0 24 20" className="ml-[13px]"><path d="M2 0 V5 M6 0 V5 M0.5 5 H7.5 V8 Q7.5 11 4 11 V19" fill="none" stroke="#fff" strokeWidth="1.6" /><rect x="9" y="3" width="13" height="15" rx="2" fill="none" stroke="#fff" strokeWidth="1.4" /><rect x="9" y="9" width="7" height="9" fill="#fff" /><rect x="22.5" y="8" width="1.5" height="5" fill="#fff" /></svg>
        <div className="ml-[15px] w-[91px] flex flex-col items-end text-[16.5px] leading-[24px]">
          <span>12:19 PM</span>
          <span>6/27/2023</span>
        </div>
        <span className="ml-[8px] w-[29px] h-[24px] rounded-full bg-[#f47c5f] text-[#222] text-[15px] flex items-center justify-center">11</span>
      </div>
    </div>
  );
}

export default function App() {
  return (
    <div className="relative w-[1920px] h-[1080px] overflow-hidden bg-white flex flex-col font-['Open_Sans','Noto_Sans',sans-serif]">
      <div className="bg-[#0072c6]">
        <TitleBar />
      </div>
      <Ribbon />
      <div className="h-[759px] shrink-0 flex overflow-hidden">
        <Rail />
        <ListPane />
        <Reading />
      </div>
      <StatusBar />
      <Taskbar />
      <Popup />
    </div>
  );
}
